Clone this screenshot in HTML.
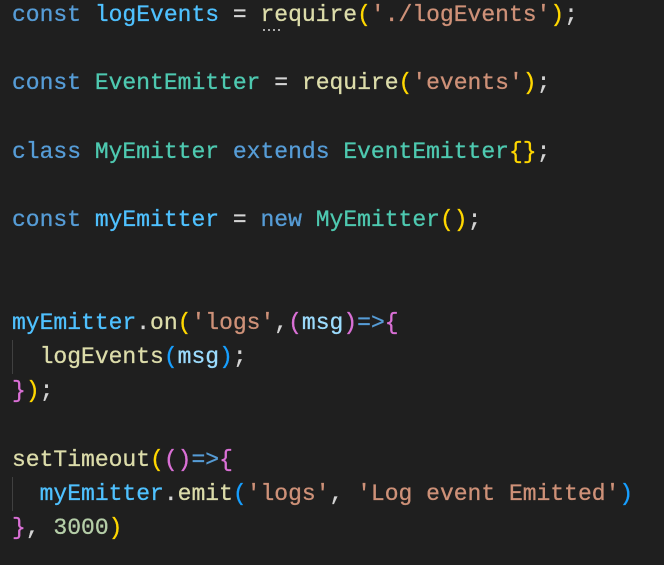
<!DOCTYPE html><html><head><style>
body{margin:0;background:#1f1f1f;width:664px;height:565px;overflow:hidden}
pre{margin:0;position:absolute;left:12px;top:-2px;font-family:"Liberation Mono",monospace;font-size:23px;line-height:34.2px;color:#d4d4d4;-webkit-text-stroke:0.3px currentColor}
.k{color:#569cd6}.v{color:#4fc1ff}.p{color:#9cdcfe}.c{color:#4ec9b0}.f{color:#dcdcaa}.s{color:#ce9178}.n{color:#b5cea8}
.y{color:#ffd700}.m{color:#da70d6}.b{color:#179fff}
.g{position:absolute;left:12px;width:1px;background:#404040}
.d{position:absolute;top:29px;left:263px;width:18px;height:2px;background:repeating-linear-gradient(90deg,#aaa 0 2px,transparent 2px 5px)}
</style></head><body>
<div class="g" style="top:340px;height:34px"></div>
<div class="g" style="top:477px;height:34px"></div>
<div class="d"></div>
<pre><span class="k">const</span> <span class="v">logEvents</span> = <span class="f">require</span><span class="y">(</span><span class="s">'./logEvents'</span><span class="y">)</span>;

<span class="k">const</span> <span class="c">EventEmitter</span> = <span class="f">require</span><span class="y">(</span><span class="s">'events'</span><span class="y">)</span>;

<span class="k">class</span> <span class="c">MyEmitter</span> <span class="k">extends</span> <span class="c">EventEmitter</span><span class="y">{}</span>;

<span class="k">const</span> <span class="v">myEmitter</span> = <span class="k">new</span> <span class="c">MyEmitter</span><span class="y">()</span>;


<span class="v">myEmitter</span>.<span class="f">on</span><span class="y">(</span><span class="s">'logs'</span>,<span class="m">(</span><span class="p">msg</span><span class="m">)</span><span class="k">=&gt;</span><span class="m">{</span>
  <span class="f">logEvents</span><span class="b">(</span><span class="p">msg</span><span class="b">)</span>;
<span class="m">}</span><span class="y">)</span>;

<span class="f">setTimeout</span><span class="y">(</span><span class="m">()</span><span class="k">=&gt;</span><span class="m">{</span>
  <span class="v">myEmitter</span>.<span class="f">emit</span><span class="b">(</span><span class="s">'logs'</span>, <span class="s">'Log event Emitted'</span><span class="b">)</span>
<span class="m">}</span>, <span class="n">3000</span><span class="y">)</span></pre>
</body></html>
